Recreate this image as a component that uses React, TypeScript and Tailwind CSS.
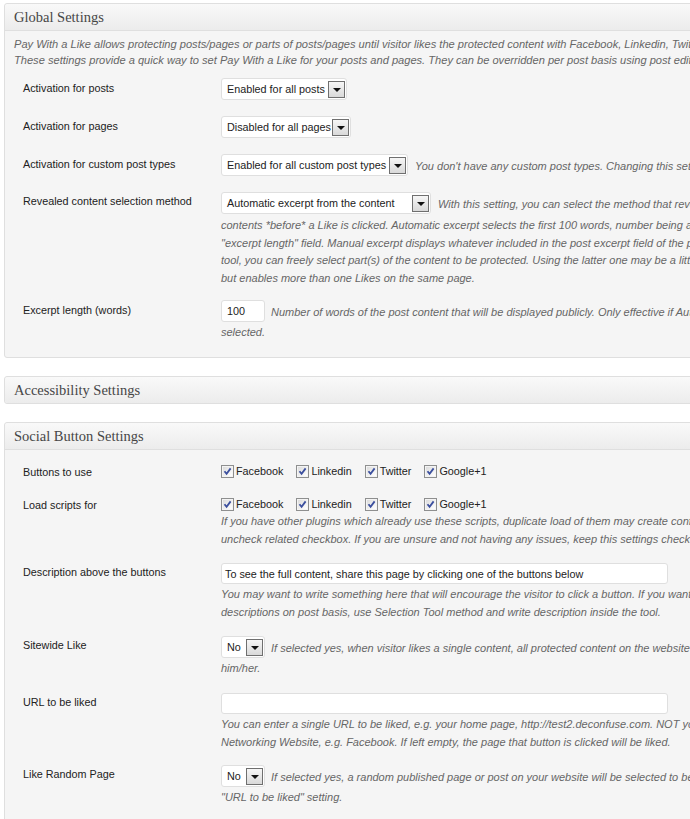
// Settings page for a "Pay With a Like" style plugin, old WP admin look.
// Page is wider than the window; the right side is simply cut off.

import type { ReactElement, ReactNode } from 'react'

function Postbox({ title, children }: { title: string; children?: ReactNode }): ReactElement {
  return (
    <div className="w-[1000px] rounded-[3px] border border-[#dfdfdf] bg-[#f5f5f5]">
      <div
        className={
          'flex items-center rounded-t-[3px] bg-gradient-to-b from-[#f9f9f9] to-[#ececec] pl-[9px] ' +
          (children ? 'h-[27px] border-b border-[#dfdfdf]' : 'h-[26px] rounded-b-[3px]')
        }
      >
        <h3 className="pt-[1px] font-['Liberation_Serif',Georgia,serif] text-[14.5px] leading-none text-[#464646]">
          {title}
        </h3>
      </div>
      {children}
    </div>
  )
}

function Row({
  label,
  className,
  tight = false,
  children,
}: {
  label: string
  className: string
  tight?: boolean
  children: ReactNode
}): ReactElement {
  return (
    <div className={'flex items-start ' + className}>
      <div
        className={
          'w-[207px] shrink-0 pl-[9px] text-[10.8px] leading-[17px] text-[#222] ' + (tight ? 'pt-[1px]' : 'pt-[2px]')
        }
      >
        {label}
      </div>
      <div className="min-w-0">{children}</div>
    </div>
  )
}

function Arrow(): ReactElement {
  return (
    <span className="flex h-[17px] w-[17px] shrink-0 items-center justify-center border border-[#6f6f6f] bg-gradient-to-b from-[#f6f6f6] to-[#d9d9d9] pt-[2px]">
      <span className="h-0 w-0 border-x-[4px] border-t-[4px] border-x-transparent border-t-[#111]" />
    </span>
  )
}

function Select({ value, className }: { value: string; className: string }): ReactElement {
  return (
    <div
      className={
        'flex h-[22px] shrink-0 items-center rounded-[3px] border border-[#dfdfdf] bg-white pl-[5px] pr-[1px] text-[10.8px] text-[#222] ' +
        className
      }
    >
      <span className="whitespace-nowrap pt-[1px]">{value}</span>
      <span className="ml-auto">
        <Arrow />
      </span>
    </div>
  )
}

function TextBox({ value, className }: { value: string; className: string }): ReactElement {
  return (
    <div
      className={
        'flex shrink-0 items-center rounded-[3px] border border-[#dfdfdf] bg-white text-[10.8px] text-[#222] ' +
        className
      }
    >
      <span className="whitespace-nowrap pt-[1px]">{value}</span>
    </div>
  )
}

function Hint({ children }: { children: ReactNode }): ReactElement {
  return <div className="whitespace-nowrap pt-[2px] text-[11px] italic text-[#666]">{children}</div>
}

function Lines({ lines }: { lines: string[] }): ReactElement {
  return (
    <div className="pt-[1px] text-[11px] italic leading-[18px] text-[#666]">
      {lines.map((l) => (
        <div key={l} className="whitespace-nowrap">
          {l}
        </div>
      ))}
    </div>
  )
}

function Check(): ReactElement {
  return (
    <svg width="13" height="13" viewBox="0 0 13 13" className="shrink-0">
      <defs>
        <linearGradient id="cbg" x1="0" y1="0" x2="1" y2="1">
          <stop offset="0" stopColor="#dcdcdc" />
          <stop offset="1" stopColor="#ffffff" />
        </linearGradient>
      </defs>
      <rect x="0.5" y="0.5" width="12" height="12" fill="#f4f4f4" stroke="#8e8f8f" />
      <rect x="2" y="2" width="9" height="9" fill="url(#cbg)" />
      <path d="M3.5 6.2 L5.6 8.8 L9.6 3.4" fill="none" stroke="#3b4f9e" strokeWidth="1.8" />
    </svg>
  )
}

const NETWORKS = ['Facebook', 'Linkedin', 'Twitter', 'Google+1']

function Checks(): ReactElement {
  return (
    <div className="flex h-[17px] items-center gap-[13px] pt-[2px] text-[10.8px] text-[#222]">
      {NETWORKS.map((n) => (
        <label key={n} className="flex items-center gap-[2px]">
          <Check />
          <span>{n}</span>
        </label>
      ))}
    </div>
  )
}

export default function App(): ReactElement {
  return (
    <div className="h-[819px] w-[690px] overflow-hidden bg-white font-['Liberation_Sans',Arial,sans-serif]">
      <div className="flex w-[1010px] flex-col gap-[18px] pl-[4px] pt-[3px]">
        <Postbox title="Global Settings">
          <div className="px-[9px] pb-[16px] pt-[5px]">
            <div className="text-[11.1px] italic leading-[16px] text-[#666]">
              <div className="whitespace-nowrap">
                Pay With a Like allows protecting posts/pages or parts of posts/pages until visitor likes the protected
                content with Facebook, Linkedin, Twitter or Google+1.
              </div>
              <div className="whitespace-nowrap">
                These settings provide a quick way to set Pay With a Like for your posts and pages. They can be
                overridden per post basis using post editor page.
              </div>
            </div>

            <Row label="Activation for posts" className="mt-[10px]">
              <Select value="Enabled for all posts" className="w-[126px]" />
            </Row>
            <Row label="Activation for pages" className="mt-[16px]">
              <Select value="Disabled for all pages" className="w-[130px]" />
            </Row>
            <Row label="Activation for custom post types" className="mt-[16px]">
              <div className="flex items-center gap-[7px]">
                <Select value="Enabled for all custom post types" className="w-[187px]" />
                <Hint>You don't have any custom post types. Changing this setting will have no effect.</Hint>
              </div>
            </Row>
            <Row label="Revealed content selection method" className="mt-[16px]" tight>
              <div className="flex items-center gap-[7px]">
                <Select value="Automatic excerpt from the content" className="w-[210px]" />
                <Hint>
                  With this setting, you can select the method that reveals part of the content, i.e. the public
                </Hint>
              </div>
              <div className="mt-[3px] text-[11px] italic leading-[17.5px] text-[#666]">
                <div className="whitespace-nowrap">
                  contents *before* a Like is clicked. Automatic excerpt selects the first 100 words, number being
                  adjustable with
                </div>
                <div className="whitespace-nowrap">
                  "excerpt length" field. Manual excerpt displays whatever included in the post excerpt field of the
                  post. With selection
                </div>
                <div className="whitespace-nowrap">
                  tool, you can freely select part(s) of the content to be protected. Using the latter one may be a
                  little bit complicated,
                </div>
                <div className="whitespace-nowrap">but enables more than one Likes on the same page.</div>
              </div>
            </Row>
            <Row label="Excerpt length (words)" className="mt-[13px]">
              <div className="flex items-center gap-[6px]">
                <TextBox value="100" className="h-[22px] w-[44px] pl-[5px]" />
                <Hint>
                  Number of words of the post content that will be displayed publicly. Only effective if Automatic
                  excerpt is
                </Hint>
              </div>
              <Lines lines={['selected.']} />
            </Row>
          </div>
        </Postbox>

        <Postbox title="Accessibility Settings" />

        <Postbox title="Social Button Settings">
          <div className="px-[9px] pb-[20px] pt-[12px]">
            <Row label="Buttons to use" className="">
              <Checks />
            </Row>
            <Row label="Load scripts for" className="mt-[14px]">
              <Checks />
              <div className="mt-[1px] text-[11px] italic leading-[17.5px] text-[#666]">
                <div className="whitespace-nowrap">
                  If you have other plugins which already use these scripts, duplicate load of them may create conflicts.
                  In that case
                </div>
                <div className="whitespace-nowrap">
                  uncheck related checkbox. If you are unsure and not having any issues, keep this settings checked.
                </div>
              </div>
            </Row>
            <Row label="Description above the buttons" className="mt-[15px]" tight>
              <TextBox
                value="To see the full content, share this page by clicking one of the buttons below"
                className="h-[21px] w-[447px] pl-[3px]"
              />
              <Lines
                lines={[
                  'You may want to write something here that will encourage the visitor to click a button. If you want to have different',
                  'descriptions on post basis, use Selection Tool method and write description inside the tool.',
                ]}
              />
            </Row>
            <Row label="Sitewide Like" className="mt-[15px]" tight>
              <div className="flex items-center gap-[6px]">
                <Select value="No" className="w-[44px]" />
                <Hint>
                  If selected yes, when visitor likes a single content, all protected content on the website will be
                  revealed to
                </Hint>
              </div>
              <Lines lines={['him/her.']} />
            </Row>
            <Row label="URL to be liked" className="mt-[16px]" tight>
              <TextBox value="" className="h-[21px] w-[447px] pl-[3px]" />
              <Lines
                lines={[
                  'You can enter a single URL to be liked, e.g. your home page, http://test2.deconfuse.com. NOT your Social',
                  'Networking Website, e.g. Facebook. If left empty, the page that button is clicked will be liked.',
                ]}
              />
            </Row>
            <Row label="Like Random Page" className="mt-[14px]" tight>
              <div className="flex items-center gap-[6px]">
                <Select value="No" className="w-[44px]" />
                <Hint>
                  If selected yes, a random published page or post on your website will be selected to be liked. This
                  disables
                </Hint>
              </div>
              <Lines lines={['"URL to be liked" setting.']} />
            </Row>
          </div>
        </Postbox>
      </div>
    </div>
  )
}
